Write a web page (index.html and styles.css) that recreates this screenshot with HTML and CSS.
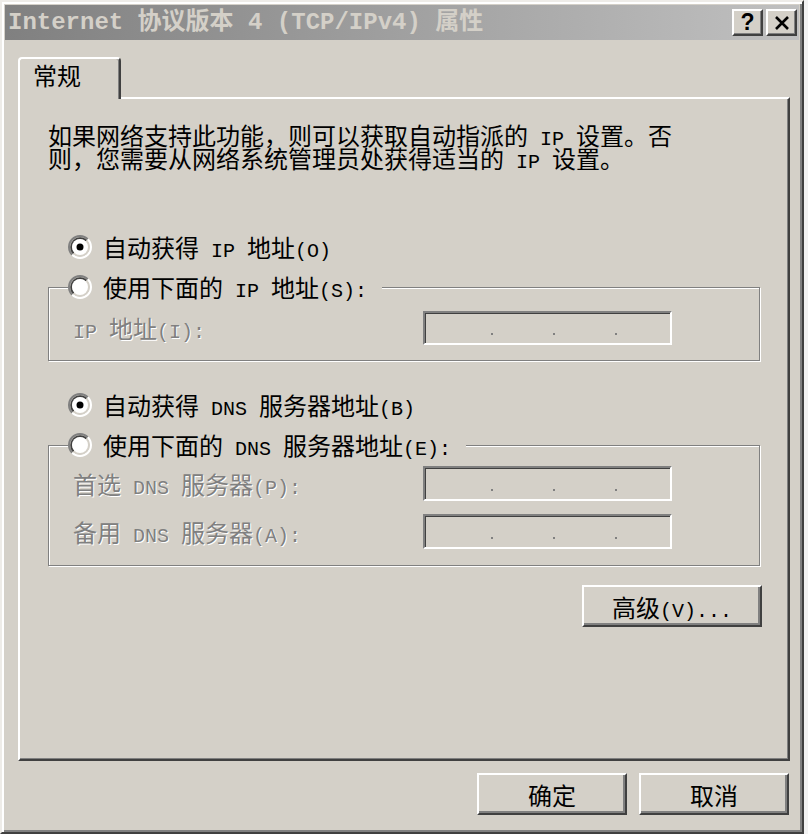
FILE: index.html
```html
<!DOCTYPE html>
<html lang="zh-CN">

<head>
  <meta charset="UTF-8">
  <meta name="viewport" content="width=device-width, initial-scale=1.0">
  <title>Internet 协议版本 4 (TCP/IPv4) 属性</title>
  <link rel="stylesheet" href="styles.css">
</head>

<body>
  <!-- shared radio button drawing -->
  <svg class="defs" width="0" height="0">
    <symbol id="radio" viewBox="0 0 24 24">
      <path d="M4.22 19.78A11 11 0 0 1 19.78 4.22" fill="none" stroke="#808080" stroke-width="2" />
      <path d="M19.78 4.22A11 11 0 0 1 4.22 19.78" fill="none" stroke="#fff" stroke-width="2" />
      <path d="M5.64 18.36A9 9 0 0 1 18.36 5.64" fill="none" stroke="#404040" stroke-width="2" />
      <path d="M18.36 5.64A9 9 0 0 1 5.64 18.36" fill="none" stroke="#d4d0c8" stroke-width="2" />
      <circle cx="12" cy="12" r="8" fill="#fff" />
    </symbol>
  </svg>

  <div class="window">
    <div class="titlebar">
      <span class="title">Internet 协议版本 4 (TCP/IPv4) 属性</span>
      <div class="caption-btns">
        <button class="cap-btn">?</button>
        <button class="cap-btn">
          <svg width="16" height="14" viewBox="0 0 16 14">
            <path d="M2 1L14 13M14 1L2 13" stroke="#000" stroke-width="2.6" />
          </svg>
        </button>
      </div>
    </div>

    <div class="tabs">
      <div class="tab">常规</div>
    </div>

    <div class="tab-panel">
      <p class="intro">如果网络支持此功能，则可以获取自动指派的<span class="en"> IP </span>设置。否<br>则，您需要从网络系统管理员处获得适当的<span class="en"> IP </span>设置。</p>

      <div class="option option-first">
        <svg class="radio"><use href="#radio" /><circle cx="12" cy="12" r="3.5" fill="#000" /></svg>
        <span>自动获得<span class="en"> IP </span>地址<span class="en">(O)</span></span>
      </div>

      <fieldset class="group">
        <legend class="option">
          <svg class="radio"><use href="#radio" /></svg>
          <span>使用下面的<span class="en"> IP </span>地址<span class="en">(S):</span></span>
        </legend>
        <div class="field">
          <span class="field-label"><span class="en">IP </span>地址<span class="en">(I):</span></span>
          <div class="ip-box"><span class="dot"></span><span class="dot"></span><span class="dot"></span></div>
        </div>
      </fieldset>

      <div class="option option-dns">
        <svg class="radio"><use href="#radio" /><circle cx="12" cy="12" r="3.5" fill="#000" /></svg>
        <span>自动获得<span class="en"> DNS </span>服务器地址<span class="en">(B)</span></span>
      </div>

      <fieldset class="group group-dns">
        <legend class="option">
          <svg class="radio"><use href="#radio" /></svg>
          <span>使用下面的<span class="en"> DNS </span>服务器地址<span class="en">(E):</span></span>
        </legend>
        <div class="field">
          <span class="field-label">首选<span class="en"> DNS </span>服务器<span class="en">(P):</span></span>
          <div class="ip-box"><span class="dot"></span><span class="dot"></span><span class="dot"></span></div>
        </div>
        <div class="field">
          <span class="field-label">备用<span class="en"> DNS </span>服务器<span class="en">(A):</span></span>
          <div class="ip-box"><span class="dot"></span><span class="dot"></span><span class="dot"></span></div>
        </div>
      </fieldset>

      <div class="panel-actions">
        <button class="btn btn-wide">高级<span class="en">(V)...</span></button>
      </div>
    </div>

    <div class="dialog-actions">
      <button class="btn">确定</button>
      <button class="btn">取消</button>
    </div>
  </div>
</body>

</html>
```

FILE: styles.css
```css
body {
  margin: 0;
  background-color: #f2f2f2;
  font-family: "Noto Sans CJK SC", sans-serif;
  font-size: 24px;
  color: #000;
}

.defs {
  position: absolute;
}

.en {
  font-family: "Liberation Mono", monospace;
  font-size: 20px;
  line-height: 0;
}

.window {
  box-sizing: border-box;
  width: 804px;
  height: 834px;
  padding: 3px;
  background-color: #d4d0c8;
  border: 2px solid;
  border-color: #eeece8 #404040 #404040 #eeece8;
  box-shadow: inset 2px 2px #fff, inset -2px -2px #808080;
}

/* title bar */
.titlebar {
  display: flex;
  align-items: center;
  height: 35px;
  padding: 0 2px 0 3px;
  background: linear-gradient(to right, #808080, #c0c0c0);
}

.title {
  flex: 1;
  font-family: "Liberation Mono", "Noto Sans CJK SC", monospace;
  font-weight: bold;
  font-size: 24px;
  line-height: 35px;
  color: #d4d0c8;
  white-space: nowrap;
}

.caption-btns {
  display: flex;
  gap: 3px;
}

.cap-btn {
  box-sizing: border-box;
  width: 31px;
  height: 27px;
  padding: 0;
  display: flex;
  align-items: center;
  justify-content: center;
  background-color: #d4d0c8;
  border: 2px solid;
  border-color: #fff #404040 #404040 #fff;
  box-shadow: inset -1px -1px #808080;
  font: bold 23px "Liberation Sans", sans-serif;
  color: #000;
}

/* tabs */
.tabs {
  display: flex;
  margin: 17px 0 0 13px;
}

.tab {
  position: relative;
  z-index: 1;
  box-sizing: border-box;
  width: 103px;
  height: 42px;
  margin-bottom: -2px;
  padding-left: 13px;
  line-height: 32px;
  background-color: #d4d0c8;
  border: 2px solid;
  border-color: #fff #404040 transparent #fff;
  border-bottom: 0;
  border-radius: 4px 4px 0 0;
  box-shadow: inset -1px 0 #808080;
}

.tab-panel {
  box-sizing: border-box;
  height: 664px;
  margin: 0 9px 0 13px;
  border: 2px solid;
  border-color: #fff #404040 #404040 #fff;
  box-shadow: inset -1px -1px #808080;
}

.intro {
  margin: 0;
  padding: 24px 0 0 28px;
  line-height: 23px;
  white-space: nowrap;
}

/* radio rows */
.option {
  display: flex;
  align-items: center;
  gap: 11px;
  height: 40px;
  line-height: 40px;
  white-space: nowrap;
}

.option-first {
  margin: 58px 0 0 48px;
}

.option-dns {
  margin: 24px 0 0 48px;
}

.radio {
  flex: none;
  width: 24px;
  height: 24px;
}

/* group boxes */
.group {
  min-width: 0;
  margin: 0 28px;
  padding: 0 0 15px;
  border: 1px solid #808080;
  box-shadow: inset 1px 1px #fff, 1px 1px #fff;
}

.group legend {
  margin-left: 19px;
  padding: 0 15px 0 0;
  background-color: #d4d0c8;
}

.field {
  display: flex;
  align-items: center;
  height: 34px;
  margin: 4px 0 0 24px;
}

.group-dns {
  padding-bottom: 16px;
}

.group-dns .field {
  height: 35px;
  margin-top: 13px;
}

.group-dns .field:first-of-type {
  margin-top: 1px;
}

.field-label {
  width: 350px;
  line-height: 34px;
  color: #808080;
  text-shadow: 1px 1px #fff;
  white-space: nowrap;
}

.ip-box {
  box-sizing: border-box;
  display: flex;
  align-items: flex-end;
  gap: 60px;
  width: 249px;
  height: 100%;
  padding: 0 0 8px 66px;
  border: 2px solid;
  border-color: #808080 #fff #fff #808080;
  box-shadow: inset 1px 1px #404040;
}

.dot {
  width: 2px;
  height: 2px;
  background-color: #808080;
}

/* buttons */
.btn {
  box-sizing: border-box;
  height: 42px;
  padding: 0;
  font: inherit;
  color: #000;
  background-color: #d4d0c8;
  border: 2px solid;
  border-color: #fff #404040 #404040 #fff;
  box-shadow: inset -2px -2px #808080;
}

.panel-actions {
  display: flex;
  justify-content: flex-end;
  margin: 19px 26px 0 0;
}

.btn-wide {
  width: 180px;
}

.dialog-actions {
  display: flex;
  justify-content: flex-end;
  gap: 12px;
  margin-top: 12px;
  padding-right: 10px;
}

.dialog-actions .btn {
  width: 150px;
}
```
